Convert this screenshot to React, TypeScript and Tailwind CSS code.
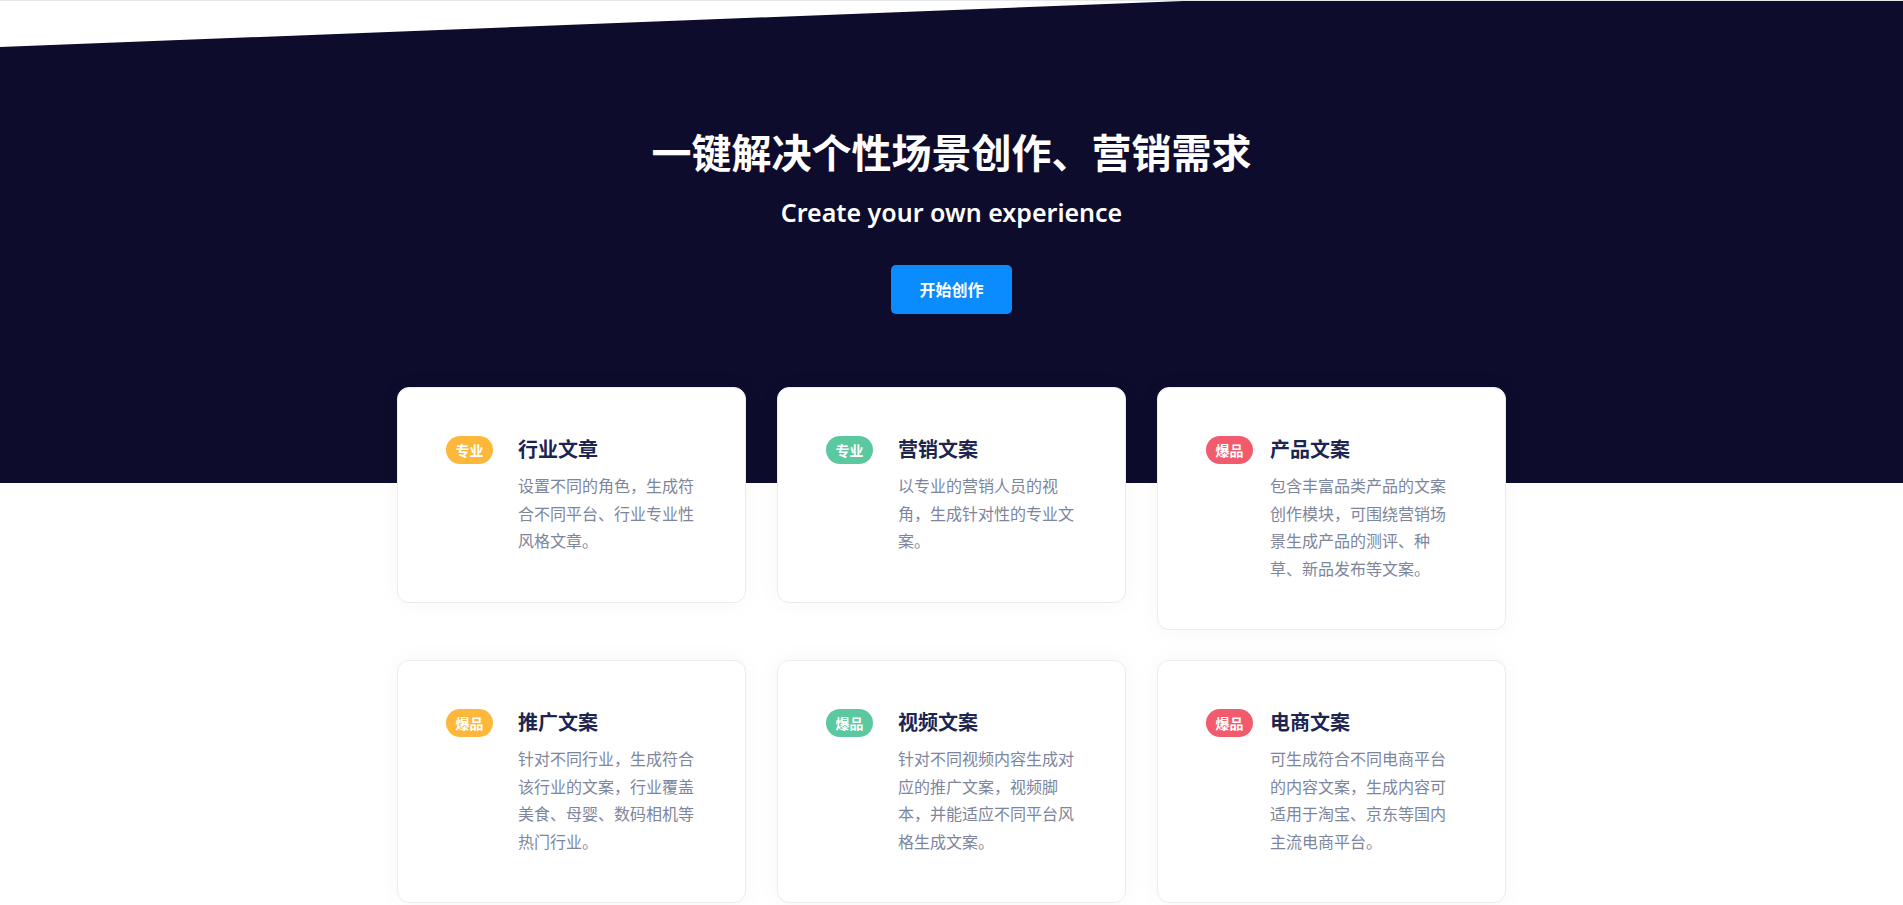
const cards = [
  {
    tag: "专业",
    tagColor: "bg-[#fdb83b]",
    title: "行业文章",
    desc: "设置不同的角色，生成符合不同平台、行业专业性风格文章。",
    gap: "gap-[25px]",
  },
  {
    tag: "专业",
    tagColor: "bg-[#5bc8a0]",
    title: "营销文案",
    desc: "以专业的营销人员的视角，生成针对性的专业文案。",
    gap: "gap-[25px]",
  },
  {
    tag: "爆品",
    tagColor: "bg-[#f25a6e]",
    title: "产品文案",
    desc: "包含丰富品类产品的文案创作模块，可围绕营销场景生成产品的测评、种草、新品发布等文案。",
    gap: "gap-[17px]",
  },
  {
    tag: "爆品",
    tagColor: "bg-[#fdb83b]",
    title: "推广文案",
    desc: "针对不同行业，生成符合该行业的文案，行业覆盖美食、母婴、数码相机等热门行业。",
    gap: "gap-[25px]",
  },
  {
    tag: "爆品",
    tagColor: "bg-[#5bc8a0]",
    title: "视频文案",
    desc: "针对不同视频内容生成对应的推广文案，视频脚本，并能适应不同平台风格生成文案。",
    gap: "gap-[25px]",
  },
  {
    tag: "爆品",
    tagColor: "bg-[#f25a6e]",
    title: "电商文案",
    desc: "可生成符合不同电商平台的内容文案，生成内容可适用于淘宝、京东等国内主流电商平台。",
    gap: "gap-[17px]",
  },
];

export default function App() {
  return (
    <div
      className="min-h-screen bg-white border-t border-[#e5e7eb]"
      style={{ fontFamily: '"Noto Sans", "Noto Sans CJK SC", sans-serif' }}
    >
      {/* Hero */}
      <section className="h-[482px] bg-[#0e0c2c] pt-[127px] text-center text-white [clip-path:polygon(0_46px,62.2%_0,100%_0,100%_100%,0_100%)]">
        <h1 className="text-[40px] leading-[50px] font-bold">
          一键解决个性场景创作、营销需求
        </h1>
        <p className="mt-[18px] text-[25px] leading-[32px] font-semibold">
          Create your own experience
        </p>
        <button className="mt-[37px] h-[49px] w-[121px] rounded-[5px] bg-[#0a8cff] text-[16px] font-semibold text-white">
          开始创作
        </button>
      </section>

      {/* Cards */}
      <div className="relative z-10 mx-auto -mt-[96px] grid w-[1109px] grid-cols-[repeat(3,349px)] items-start gap-x-[31px] gap-y-[30px] pb-10">
        {cards.map((card, index) => (
          <div
            key={index}
            className={`flex items-start ${card.gap} rounded-[12px] border border-[#eaecf2] bg-white pl-[48px] pt-[48px] pb-[46px] shadow-[0_0_24px_rgba(20,30,80,0.04)]`}
          >
            <span
              className={`flex h-[28px] w-[47px] shrink-0 items-center justify-center rounded-full ${card.tagColor} text-[14px] font-bold text-white`}
            >
              {card.tag}
            </span>
            <div className="w-[180px]">
              <h3 className="text-[20px] leading-[28px] font-bold text-[#1b2550]">
                {card.title}
              </h3>
              <p className="mt-[9px] text-[16px] leading-[27.5px] text-[#7d869c]">
                {card.desc}
              </p>
            </div>
          </div>
        ))}
      </div>
    </div>
  );
}
